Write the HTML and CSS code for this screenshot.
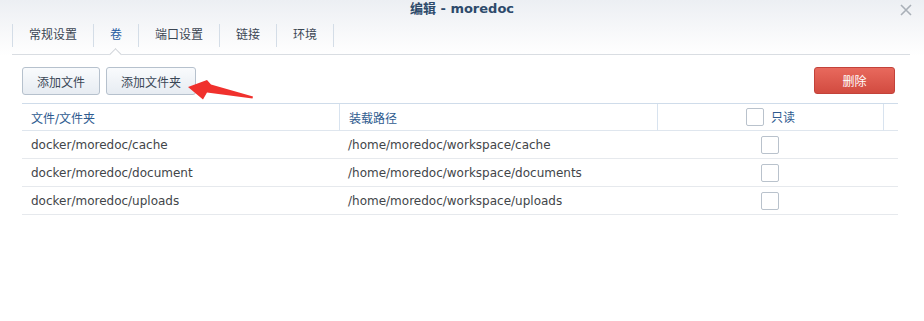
FILE: index.html
```html
<!DOCTYPE html>
<html lang="zh-CN">
<head>
  <meta charset="UTF-8">
  <meta name="viewport" content="width=device-width, initial-scale=1.0">
  <title>编辑 - moredoc</title>
  <link rel="stylesheet" href="styles.css">
</head>
<body>
  <div class="dialog">
    <!-- Title bar -->
    <div class="titlebar">
      <span></span>
      <h1>编辑 - moredoc</h1>
      <a href="#" class="close" title="关闭">
        <svg width="12" height="12" viewBox="0 0 12 12">
          <path d="M1 1 L11 11 M11 1 L1 11" stroke="#a9b0b8" stroke-width="1.6" fill="none"/>
        </svg>
      </a>
    </div>

    <!-- Tabs -->
    <div class="tabs">
      <a href="#" class="tab">常规设置</a>
      <a href="#" class="tab active">卷</a>
      <a href="#" class="tab">端口设置</a>
      <a href="#" class="tab">链接</a>
      <a href="#" class="tab">环境</a>
    </div>

    <!-- Volume settings -->
    <div class="content">
      <div class="toolbar">
        <button class="btn">添加文件</button>
        <button class="btn">添加文件夹</button>
        <button class="btn btn-danger">删除</button>

        <svg class="annotation" width="70" height="24" viewBox="186 78 70 24">
          <polygon points="188,87 207,80 211,84.5 253,96.5 252.5,98.5 207,92.5 203,99.5" fill="#f0312d"/>
        </svg>
      </div>

      <table class="volumes">
        <colgroup>
          <col style="width: 317px">
          <col style="width: 318px">
          <col style="width: 226px">
          <col>
        </colgroup>
        <thead>
          <tr>
            <th>文件/文件夹</th>
            <th>装载路径</th>
            <th class="center"><span class="checkbox"></span>只读</th>
            <th></th>
          </tr>
        </thead>
        <tbody>
          <tr>
            <td>docker/moredoc/cache</td>
            <td>/home/moredoc/workspace/cache</td>
            <td class="center"><span class="checkbox"></span></td>
            <td></td>
          </tr>
          <tr>
            <td>docker/moredoc/document</td>
            <td>/home/moredoc/workspace/documents</td>
            <td class="center"><span class="checkbox"></span></td>
            <td></td>
          </tr>
          <tr>
            <td>docker/moredoc/uploads</td>
            <td>/home/moredoc/workspace/uploads</td>
            <td class="center"><span class="checkbox"></span></td>
            <td></td>
          </tr>
        </tbody>
      </table>
    </div>
  </div>
</body>
</html>
```

FILE: styles.css
```css
body {
  margin: 0;
  font-family: "DejaVu Sans", "Noto Sans CJK SC", sans-serif;
  font-size: 12px;
  color: #3c4046;
  background: #fff;
}

.dialog {
  height: 321px;
  background: linear-gradient(to bottom, #eceff3 0, #f6f7f9 28px, #fff 56px) no-repeat;
}

/* Title bar */
.titlebar {
  display: grid;
  grid-template-columns: 1fr auto 1fr;
  align-items: center;
  height: 17px;
}

.titlebar h1 {
  margin: 0;
  font-size: 13px;
  font-weight: bold;
  color: #2d4a6b;
  line-height: 17px;
}

.titlebar .close {
  justify-self: end;
  display: flex;
  margin: 2px 12px 0 0;
}

/* Tabs */
.tabs {
  display: flex;
  margin: 7px 14px 0 12px;
  padding-bottom: 7px;
  border-bottom: 1px solid #d9dde2;
}

.tab {
  position: relative;
  padding: 0 16px;
  height: 23px;
  line-height: 23px;
  border-left: 1px solid #d4dde7;
  color: #3b4653;
  text-decoration: none;
}

.tab:last-child {
  border-right: 1px solid #d4dde7;
}

.tab.active {
  color: #1f5aa0;
}

.tab.active::after {
  content: "";
  position: absolute;
  left: 50%;
  top: 26px;
  width: 8px;
  height: 8px;
  margin-left: -5px;
  background: #fff;
  border-top: 1px solid #d0d4d9;
  border-left: 1px solid #d0d4d9;
  transform: rotate(45deg);
}

/* Content */
.content {
  padding: 12px 26px 0 22px;
}

.toolbar {
  position: relative;
  display: flex;
  gap: 6px;
  margin-bottom: 8px;
}

.btn {
  height: 28px;
  padding: 0 14px;
  font-family: inherit;
  font-size: 12px;
  color: #3a4756;
  background: linear-gradient(#f9fbfd, #e7ecf2);
  border: 1px solid #b6c1cd;
  border-radius: 3px;
  cursor: pointer;
}

.btn-danger {
  margin-left: auto;
  margin-right: 3px;
  height: 27px;
  width: 81px;
  color: #fff;
  background: linear-gradient(#e8695d, #d24b40);
  border-color: #c3423a;
}

.annotation {
  position: absolute;
  left: 164px;
  top: 11px;
}

/* Volumes table */
.volumes {
  width: 876px;
  table-layout: fixed;
  border-spacing: 0;
  border-top: 1px solid #cfdcea;
}

.volumes th {
  height: 26px;
  padding: 0 9px;
  text-align: left;
  font-weight: normal;
  color: #2e5b8f;
  border-bottom: 1px solid #dfe6ee;
}

.volumes th + th {
  border-left: 1px solid #d8e3ef;
}

.volumes td {
  height: 27px;
  padding: 0 9px;
  color: #424549;
  border-bottom: 1px solid #e6e9ed;
  white-space: nowrap;
}

.volumes .center {
  text-align: center;
}

.checkbox {
  display: inline-block;
  width: 16px;
  height: 16px;
  vertical-align: middle;
  border: 1px solid #b9c2cc;
  border-radius: 2px;
  background: #fff;
}

.volumes th .checkbox {
  margin-right: 7px;
  margin-top: -2px;
}
```
